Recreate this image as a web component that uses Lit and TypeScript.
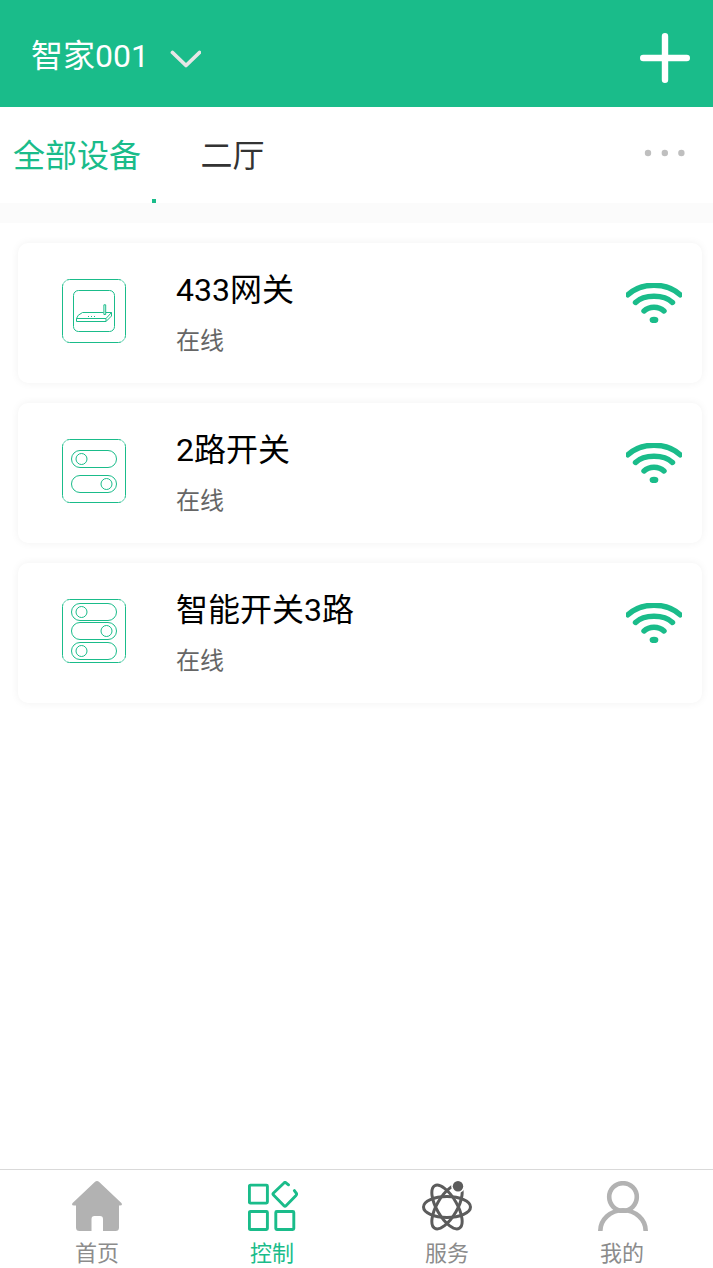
import { LitElement, html, svg, css } from "lit";
import { customElement, property } from "lit/decorators.js";
import { classMap } from "lit/directives/class-map.js";

const pill = (y: number, on: boolean) => svg`
  <rect x="9.5" y=${y} width="45" height="17" rx="8.5" />
  <circle cx=${on ? 44.5 : 19.5} cy=${y + 8.5} r="5.5" />`;

const deviceIcons: Record<string, unknown> = {
  gateway: svg`
    <rect x="11.5" y="11.5" width="41" height="41" rx="5" />
    <path d="M14.5 39.5 Q15 36 20.5 33.5 H41.5 M44 33.5 H49.5 L44 39.5 H14.5 V42.5 H44 L49.5 37 V33.5 M44 39.5 V42.5 M41.9 35.5 V25.8 H43.7 V35.5 Z" />
    <path d="M26 37.5 h1 m2 0 h1 m2 0 h1" />`,
  two: svg`${pill(11.5, false)}${pill(36.5, true)}`,
  three: svg`${pill(4.5, false)}${pill(23.5, true)}${pill(43.5, false)}`,
};

const tabIcons: Record<string, unknown> = {
  home: svg`<path fill="#b2b2b2" d="M22.8 1 Q25 -1 27.2 1 L49.4 22 Q51 24.5 48 24.5 H47 V46.5 Q47 50 43.5 50 H31 V38 Q31 35 28 35 H22.5 Q19.5 35 19.5 38 V50 H7.5 Q4 50 4 46.5 V24.5 H2 Q-1 24.5 .6 22 Z"/>`,
  control: svg`<g fill="none" stroke="#1abc8a" stroke-width="2.9" stroke-linecap="round" stroke-linejoin="round">
    <rect x="1.4" y="4.1" width="18" height="18" rx="1"/>
    <rect x="1.4" y="30.5" width="18" height="18" rx="1"/>
    <rect x="27.8" y="30.5" width="18" height="18" rx="1"/>
    <path d="M40.5 3.8 L38 1.8 Q37 1 36 2 L25.5 12 Q24.5 13 25.5 14 L36 24.8 Q37 25.8 38 24.8 L48 14.4 Q49.2 13 48 11.8 L46.4 9.6"/></g>`,
  service: svg`<g fill="none" stroke="#5c5c5c" stroke-width="3">
    <ellipse cx="25" cy="26" rx="23.5" ry="10.4"/>
    <ellipse cx="25" cy="26" rx="24.6" ry="10.2" transform="rotate(60 25 26)"/>
    <ellipse cx="25" cy="26" rx="24.6" ry="10.2" transform="rotate(-60 25 26)"/></g>
    <circle cx="36" cy="5" r="6.9" fill="#fff"/><circle cx="36" cy="5.2" r="5.2" fill="#5c5c5c"/>`,
  mine: svg`<g fill="none" stroke="#b2b2b2" stroke-width="4.6">
    <circle cx="25" cy="16" r="13.8"/><path d="M2.3 50 A22.7 20.8 0 0 1 47.7 50"/></g>`,
};

@customElement("device-card")
class DeviceCard extends LitElement {
  @property() name = "";
  @property() status = "";
  @property() kind = "";

  static styles = css`
    :host { display: flex; height: 140px; box-sizing: border-box; padding: 0 20px 0 44px; background: #fff; border-radius: 10px; box-shadow: 0 0 8px rgba(0, 0, 0, 0.06); }
    .icon { width: 64px; height: 64px; margin-top: 36px; fill: none; stroke: #1abc8a; stroke-width: 1; flex: none; }
    .info { flex: 1; margin-left: 50px; padding-top: 27px; }
    .name { font-size: 32px; line-height: 40px; color: #000; }
    .status { font-size: 24px; line-height: 30px; margin-top: 16px; color: #666; }
    .wifi { width: 56px; height: 40px; margin-top: 40px; fill: none; stroke: #1abc8a; stroke-width: 5.4; stroke-linecap: round; }
    .dot { fill: #1abc8a; stroke: none; }
    .corner { stroke: #fff; stroke-opacity: 0.6; stroke-width: 2; }
  `;

  render() {
    return html`
      <svg class="icon" viewBox="0 0 64 64"><rect x=".5" y=".5" width="63" height="63" rx="7" />
        <path class="corner" d="M.5 5 Q1 1 5 .5 M59 .5 Q63 1 63.5 5 M63.5 59 Q63 63 59 63.5 M5 63.5 Q1 63 .5 59" />${deviceIcons[this.kind]}</svg>
      <div class="info"><div class="name">${this.name}</div><div class="status">${this.status}</div></div>
      <svg class="wifi" viewBox="0 0 56 40">
        <path d="M1.8 11.8 Q12 2.2 28 2.2 Q44 2.2 54.2 11.8 M9.5 19.5 Q16 13.3 28 13.3 Q40 13.3 46.5 19.5 M18 28 Q22 24.2 28 24.2 Q34 24.2 38 28" />
        <ellipse class="dot" cx="28" cy="37" rx="4.4" ry="3.2" />
      </svg>`;
  }
}

@customElement("app-root")
class AppRoot extends LitElement {
  static styles = css`
    :host { display: flex; flex-direction: column; height: 1268px; background: #fff; font-family: Roboto, "Noto Sans CJK SC", sans-serif; font-weight: 400; overflow: hidden; }
    header { display: flex; align-items: center; height: 107px; box-sizing: border-box; padding: 8px 23px 0 31px; background: #1abc8a; color: #fff; flex: none; }
    .title { font-size: 32px; line-height: 40px; margin-top: -4px; }
    .chevron { width: 32px; height: 20px; margin: 2px 0 0 20px; }
    .add { width: 50px; height: 50px; margin-left: auto; }
    .rooms { display: flex; height: 96px; box-sizing: border-box; padding: 29px 28px 0 13px; font-size: 32px; line-height: 40px; color: #333; flex: none; }
    .room { display: flex; flex-direction: column; justify-content: space-between; width: 143px; }
    .second { margin-left: 44.5px; }
    .active { color: #1abc8a; }
    .marker { width: 4px; height: 4px; align-self: flex-end; background: #1abc8a; }
    .more { width: 41px; height: 8px; margin: 13px 0 0 auto; fill: #bfbfbf; }
    .band { height: 20px; background: #fbfbfb; flex: none; }
    main { flex: 1; display: flex; flex-direction: column; gap: 20px; padding: 20px 11px 0 18px; }
    nav { display: grid; grid-template-columns: repeat(4, 175px); height: 99px; box-sizing: border-box; padding-left: 9.5px; border-top: 1px solid #d9d9d9; flex: none; }
    .tab { display: flex; flex-direction: column; align-items: center; padding-top: 11px; font-size: 22px; line-height: 28px; color: #8c8c8c; }
    .tab svg { width: 50px; height: 50px; margin-bottom: 9px; }
    .tab:nth-child(even) svg { margin-left: 2px; }
    .tab.current { color: #1abc8a; }
  `;

  devices = [
    { name: "433网关", kind: "gateway" },
    { name: "2路开关", kind: "two" },
    { name: "智能开关3路", kind: "three" },
  ];
  tabs = [
    { label: "首页", icon: "home" },
    { label: "控制", icon: "control" },
    { label: "服务", icon: "service" },
    { label: "我的", icon: "mine" },
  ];

  render() {
    return html`
      <header>
        <span class="title">智家001</span>
        <svg class="chevron" viewBox="0 0 32 20"><path d="M3.5 3.5 L17 16.5 L30.5 3.5" fill="none" stroke="#e6e6e6" stroke-width="3.8" stroke-linecap="round" stroke-linejoin="round" /></svg>
        <svg class="add" viewBox="0 0 50 50"><path d="M25 3.2 V46.8 M3.2 25 H46.8" stroke="#fff" stroke-width="6.4" stroke-linecap="round" /></svg>
      </header>
      <div class="rooms">
        <div class="room active"><span>全部设备</span><span class="marker"></span></div>
        <div class="room second"><span>二厅</span></div>
        <svg class="more" viewBox="0 0 41 8"><circle cx="4" cy="4" r="3.2" /><circle cx="20.8" cy="4" r="3.2" /><circle cx="37.4" cy="4" r="3.2" /></svg>
      </div>
      <div class="band"></div>
      <main>${this.devices.map((d) => html`<device-card .name=${d.name} .kind=${d.kind} status="在线"></device-card>`)}</main>
      <nav>${this.tabs.map((t) => html`
        <div class=${classMap({ tab: true, current: t.icon === "control" })}>
          <svg viewBox="0 0 50 50">${tabIcons[t.icon]}</svg><span>${t.label}</span>
        </div>`)}</nav>`;
  }
}
